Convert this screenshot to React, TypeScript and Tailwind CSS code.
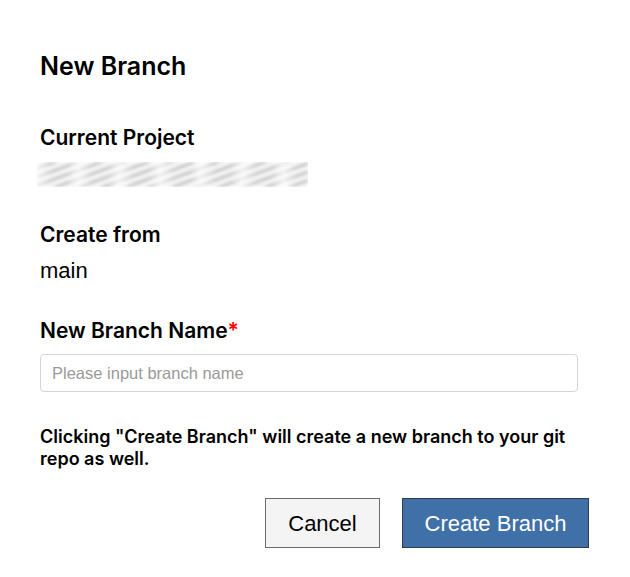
import React from "react";

export default function App(): React.ReactElement {
  return (
    <div className="w-[630px] h-[577px] bg-white font-['Inter',sans-serif] text-black">
      <div className="pl-[40px] pr-[52px] pt-[50px]">
        <h1 className="text-[25px] font-semibold leading-[32px]">New Branch</h1>

        <h2 className="mt-[42px] text-[21px] font-semibold leading-[28px]">Current Project</h2>
        {/* blurred project name */}
        <div className="mt-[10px] -ml-[3px] h-[25px] w-[271px] overflow-hidden">
          <div className="h-full w-full blur-[1.5px] bg-[repeating-linear-gradient(90deg,rgba(255,255,255,0.7)_0px,rgba(255,255,255,0)_14px,rgba(255,255,255,0)_30px,rgba(255,255,255,0.7)_41px),repeating-linear-gradient(160deg,#f3f3f3_0px,#f3f3f3_4px,#b4b4b4_6px,#f3f3f3_8px)]" />
        </div>

        <h2 className="mt-[34px] text-[21px] font-semibold leading-[28px]">Create from</h2>
        <p className="mt-[8px] text-[22px] leading-[28px] font-['Liberation_Sans',sans-serif]">main</p>

        <h2 className="mt-[32px] text-[21px] font-semibold leading-[28px]">
          New Branch Name<span className="text-[#ff0000]">*</span>
        </h2>
        <input
          type="text"
          placeholder="Please input branch name"
          className="mt-[9px] block h-[38px] w-[538px] rounded-[4px] border border-[#d4d4d8] px-[11px] text-[16.5px] font-['Liberation_Sans',sans-serif] placeholder:text-[#9a9a9a] outline-none"
        />

        <p className="mt-[34px] text-[18px] font-semibold leading-[22px]">
          Clicking "Create Branch" will create a new branch to your git repo as well.
        </p>

        <div className="mt-[28px] flex justify-end gap-[22px] -mr-[11px] font-['Liberation_Sans',sans-serif] text-[22px]">
          <button className="h-[50px] w-[115px] border border-[#6b6b6b] bg-[#f4f4f4] text-black">
            Cancel
          </button>
          <button className="h-[50px] w-[187px] border border-[#2f3a4a] bg-[#4070a8] text-white">
            Create Branch
          </button>
        </div>
      </div>
    </div>
  );
}
